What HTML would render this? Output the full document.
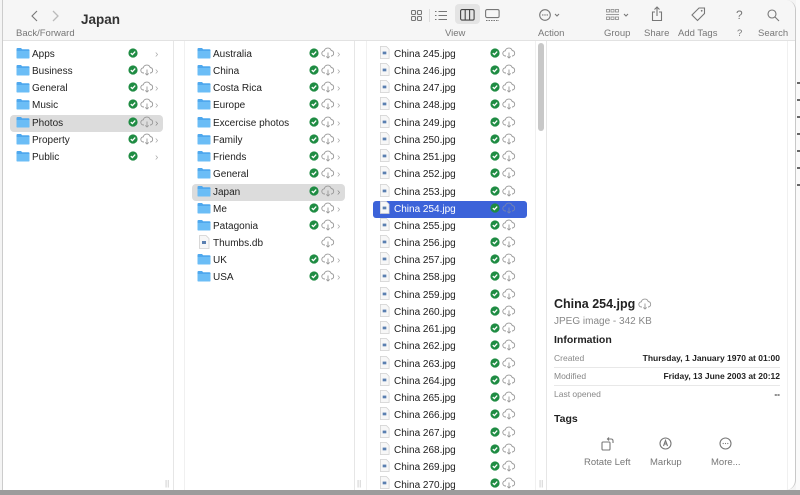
<!DOCTYPE html>
<html><head><meta charset="utf-8">
<style>
*{margin:0;padding:0;box-sizing:border-box}
body{width:800px;height:495px;background:#f4f4f4;position:relative;overflow:hidden;font-family:"Liberation Sans",sans-serif;color:#222}
.bg{position:absolute;left:0;top:490px;width:800px;height:5px;background:#9c9c9c}
.rstrip{position:absolute;left:796px;top:0;width:4px;height:490px;background:#fafafa}
.win{position:absolute;left:2px;top:0;width:794px;height:490px;background:#fff;border-radius:0 10px 10px 0;border-left:1px solid #ccc;border-right:1px solid #c8c8c8;overflow:hidden}
.tb{position:absolute;left:0;top:0;width:794px;height:41px;background:#f6f6f6;border-bottom:1px solid #e2e2e2}
.a{position:absolute;white-space:nowrap}
.lbl{font-size:9.5px;color:#777}
.row{position:absolute;height:17px;font-size:10px;line-height:17px;white-space:nowrap;margin-top:1px}
.sel{background:#dcdcdc;border-radius:4px}
.blue{background:#3c63d9;color:#fff;border-radius:3px}
.vl{position:absolute;top:41px;width:1px;height:449px;background:#e6e6e6}
.hd{position:absolute;font-size:8px;color:#bbb;top:479px}
svg{position:absolute}
.ic{stroke:#777;fill:none;stroke-width:1.1}
</style></head><body>
<div class="bg"></div><div class="rstrip"></div>
<svg width="0" height="0" style="position:absolute">
<defs>
<symbol id="fo" viewBox="0 0 14 12"><path d="M0.5 2 Q0.5 1 1.5 1 H5 L6.2 2.3 H12.5 Q13.5 2.3 13.5 3.3 V10.5 Q13.5 11.5 12.5 11.5 H1.5 Q0.5 11.5 0.5 10.5Z" fill="#4fa8ee"/><path d="M0.5 4 H13.5 V10.5 Q13.5 11.5 12.5 11.5 H1.5 Q0.5 11.5 0.5 10.5Z" fill="#6bbdf6"/></symbol>
<symbol id="ck" viewBox="0 0 10 10"><circle cx="5" cy="5" r="4.6" fill="#1f8c43"/><path d="M2.8 5.1 L4.4 6.6 L7.2 3.6" stroke="#fff" stroke-width="1.3" fill="none"/></symbol>
<symbol id="cl" viewBox="0 0 14 12"><path d="M4 9 H3.5 A2.6 2.6 0 0 1 3.3 3.8 A3.6 3.6 0 0 1 10.2 3.5 A2.8 2.8 0 0 1 10.5 9 H10" stroke="#999" stroke-width="0.9" fill="none"/><path d="M7 5.5 V11 M5.3 9.4 L7 11 L8.7 9.4" stroke="#999" stroke-width="0.9" fill="none"/></symbol>
<symbol id="fi" viewBox="0 0 12 14"><path d="M1.5 0.5 H8 L11 3.5 V13.5 H1.5Z" fill="#f7f7f7" stroke="#cfcfcf" stroke-width="0.8"/><rect x="4" y="6" width="4" height="3" fill="#5a7fb0"/></symbol>
</defs></svg>
<div class="win">
<div class="tb">
 <svg style="left:27px;top:10px" width="10" height="12"><path d="M7 1 L2 6 L7 11" class="ic" stroke-width="1.3"/></svg>
 <svg style="left:47px;top:10px" width="10" height="12"><path d="M3 1 L8 6 L3 11" stroke="#bbb" fill="none" stroke-width="1.3"/></svg>
 <div class="a lbl" style="left:13px;top:28px">Back/Forward</div>
 <div class="a" style="left:78px;top:12px;font-size:13.5px;font-weight:bold;color:#333">Japan</div>
 <svg style="left:408px;top:10px" width="11" height="11"><g class="ic" stroke-width="0.9"><rect x="0.5" y="0.5" width="4" height="4" rx="1"/><rect x="6.5" y="0.5" width="4" height="4" rx="1"/><rect x="0.5" y="6.5" width="4" height="4" rx="1"/><rect x="6.5" y="6.5" width="4" height="4" rx="1"/></g></svg>
 <div class="a" style="left:426px;top:9px;width:1px;height:13px;background:#ddd"></div>
 <svg style="left:432px;top:10px" width="13" height="11"><g class="ic" stroke-width="0.9"><path d="M0 1.5 H1.5 M0 5.5 H1.5 M0 9.5 H1.5 M3.5 1.5 H12 M3.5 5.5 H12 M3.5 9.5 H12"/></g></svg>
 <div class="a" style="left:452px;top:4px;width:25px;height:20px;background:#e4e4e4;border-radius:4px"></div>
 <svg style="left:457px;top:9px" width="15" height="12"><g stroke="#444" fill="none" stroke-width="1.1"><rect x="0.6" y="0.6" width="13.5" height="10.5" rx="1.5"/><path d="M5.2 0.6 V11 M9.6 0.6 V11"/></g></svg>
 <svg style="left:482px;top:9px" width="15" height="13"><g class="ic" stroke-width="0.9"><rect x="0.6" y="0.6" width="13.5" height="8" rx="1.5"/><path d="M1 11.5 H14" stroke-dasharray="1.5 1"/></g></svg>
 <div class="a lbl" style="left:442px;top:28px">View</div>
 <svg style="left:536px;top:9px" width="24" height="13"><circle cx="6" cy="6" r="5.3" class="ic"/><circle cx="3.8" cy="6" r="0.7" fill="#777"/><circle cx="6" cy="6" r="0.7" fill="#777"/><circle cx="8.2" cy="6" r="0.7" fill="#777"/><path d="M16 5 L18 7 L20 5" class="ic"/></svg>
 <div class="a lbl" style="left:535px;top:28px">Action</div>
 <svg style="left:603px;top:9px" width="26" height="13"><g fill="none" stroke="#888" stroke-width="0.8"><rect x="0.5" y="0.5" width="3" height="2.5"/><rect x="5" y="0.5" width="3" height="2.5"/><rect x="9.5" y="0.5" width="3" height="2.5"/><rect x="0.5" y="8" width="3" height="2.5"/><rect x="5" y="8" width="3" height="2.5"/><rect x="9.5" y="8" width="3" height="2.5"/><path d="M0 5.5 H13"/></g><path d="M18 5 L20 7 L22 5" class="ic"/></svg>
 <div class="a lbl" style="left:601px;top:28px">Group</div>
 <svg style="left:648px;top:6px" width="12" height="16"><g class="ic"><path d="M4 6 H1.5 V14.5 H10.5 V6 H8 M6 1 V10 M3.5 3.5 L6 1 L8.5 3.5"/></g></svg>
 <div class="a lbl" style="left:641px;top:28px">Share</div>
 <svg style="left:688px;top:7px" width="15" height="15"><path d="M8 1 H13.5 V6.5 L6.5 13.5 L1 8 Z" class="ic"/><circle cx="10.7" cy="3.8" r="0.9" fill="#777"/></svg>
 <div class="a lbl" style="left:675px;top:28px">Add Tags</div>
 <div class="a" style="left:733px;top:8px;font-size:12px;color:#777">?</div>
 <div class="a lbl" style="left:734px;top:28px">?</div>
 <svg style="left:764px;top:9px" width="13" height="13"><circle cx="5" cy="5" r="4" class="ic"/><path d="M8 8 L12 12" class="ic" stroke-width="1.3"/></svg>
 <div class="a lbl" style="left:755px;top:28px">Search</div>
</div>
<div class="vl" style="left:170px"></div>
<div class="vl" style="left:181px;background:#f0f0f0"></div>
<div class="vl" style="left:351px"></div>
<div class="vl" style="left:363px;background:#f0f0f0"></div>
<div class="vl" style="left:532px;background:#f0f0f0"></div>
<div class="vl" style="left:543px"></div>
<div class="vl" style="left:784px;background:#f0f0f0"></div>
<div class="a" style="left:535px;top:43px;width:6px;height:88px;background:#c8c8c8;border-radius:3px"></div>
<div class="hd" style="left:162px">||</div><div class="hd" style="left:354px">||</div><div class="hd" style="left:536px">||</div>
</div>
<div class="row sel" style="left:10px;top:114px;width:153px"></div>
<div class="row sel" style="left:192px;top:183px;width:153px"></div>
<div class="row blue" style="left:373px;top:200px;width:154px"></div>
<svg style="left:16px;top:47px" width="14" height="12"><use href="#fo"/></svg><div class="row" style="left:32px;top:45px">Apps</div><svg style="left:128px;top:48px" width="10" height="10"><use href="#ck"/></svg><div class="row" style="left:155px;top:45px;color:#aaa">›</div>
<svg style="left:16px;top:64px" width="14" height="12"><use href="#fo"/></svg><div class="row" style="left:32px;top:62px">Business</div><svg style="left:128px;top:65px" width="10" height="10"><use href="#ck"/></svg><svg style="left:140px;top:64px" width="14" height="12"><use href="#cl"/></svg><div class="row" style="left:155px;top:62px;color:#aaa">›</div>
<svg style="left:16px;top:81px" width="14" height="12"><use href="#fo"/></svg><div class="row" style="left:32px;top:79px">General</div><svg style="left:128px;top:82px" width="10" height="10"><use href="#ck"/></svg><svg style="left:140px;top:81px" width="14" height="12"><use href="#cl"/></svg><div class="row" style="left:155px;top:79px;color:#aaa">›</div>
<svg style="left:16px;top:98px" width="14" height="12"><use href="#fo"/></svg><div class="row" style="left:32px;top:96px">Music</div><svg style="left:128px;top:99px" width="10" height="10"><use href="#ck"/></svg><svg style="left:140px;top:98px" width="14" height="12"><use href="#cl"/></svg><div class="row" style="left:155px;top:96px;color:#aaa">›</div>
<svg style="left:16px;top:116px" width="14" height="12"><use href="#fo"/></svg><div class="row" style="left:32px;top:114px">Photos</div><svg style="left:128px;top:117px" width="10" height="10"><use href="#ck"/></svg><svg style="left:140px;top:116px" width="14" height="12"><use href="#cl"/></svg><div class="row" style="left:155px;top:114px;color:#888">›</div>
<svg style="left:16px;top:133px" width="14" height="12"><use href="#fo"/></svg><div class="row" style="left:32px;top:131px">Property</div><svg style="left:128px;top:134px" width="10" height="10"><use href="#ck"/></svg><svg style="left:140px;top:133px" width="14" height="12"><use href="#cl"/></svg><div class="row" style="left:155px;top:131px;color:#aaa">›</div>
<svg style="left:16px;top:150px" width="14" height="12"><use href="#fo"/></svg><div class="row" style="left:32px;top:148px">Public</div><svg style="left:128px;top:151px" width="10" height="10"><use href="#ck"/></svg><div class="row" style="left:155px;top:148px;color:#aaa">›</div>
<svg style="left:197px;top:47px" width="14" height="12"><use href="#fo"/></svg><div class="row" style="left:213px;top:45px">Australia</div><svg style="left:309px;top:48px" width="10" height="10"><use href="#ck"/></svg><svg style="left:321px;top:47px" width="14" height="12"><use href="#cl"/></svg><div class="row" style="left:337px;top:45px;color:#aaa">›</div>
<svg style="left:197px;top:64px" width="14" height="12"><use href="#fo"/></svg><div class="row" style="left:213px;top:62px">China</div><svg style="left:309px;top:65px" width="10" height="10"><use href="#ck"/></svg><svg style="left:321px;top:64px" width="14" height="12"><use href="#cl"/></svg><div class="row" style="left:337px;top:62px;color:#aaa">›</div>
<svg style="left:197px;top:81px" width="14" height="12"><use href="#fo"/></svg><div class="row" style="left:213px;top:79px">Costa Rica</div><svg style="left:309px;top:82px" width="10" height="10"><use href="#ck"/></svg><svg style="left:321px;top:81px" width="14" height="12"><use href="#cl"/></svg><div class="row" style="left:337px;top:79px;color:#aaa">›</div>
<svg style="left:197px;top:98px" width="14" height="12"><use href="#fo"/></svg><div class="row" style="left:213px;top:96px">Europe</div><svg style="left:309px;top:99px" width="10" height="10"><use href="#ck"/></svg><svg style="left:321px;top:98px" width="14" height="12"><use href="#cl"/></svg><div class="row" style="left:337px;top:96px;color:#aaa">›</div>
<svg style="left:197px;top:116px" width="14" height="12"><use href="#fo"/></svg><div class="row" style="left:213px;top:114px">Excercise photos</div><svg style="left:309px;top:117px" width="10" height="10"><use href="#ck"/></svg><svg style="left:321px;top:116px" width="14" height="12"><use href="#cl"/></svg><div class="row" style="left:337px;top:114px;color:#aaa">›</div>
<svg style="left:197px;top:133px" width="14" height="12"><use href="#fo"/></svg><div class="row" style="left:213px;top:131px">Family</div><svg style="left:309px;top:134px" width="10" height="10"><use href="#ck"/></svg><svg style="left:321px;top:133px" width="14" height="12"><use href="#cl"/></svg><div class="row" style="left:337px;top:131px;color:#aaa">›</div>
<svg style="left:197px;top:150px" width="14" height="12"><use href="#fo"/></svg><div class="row" style="left:213px;top:148px">Friends</div><svg style="left:309px;top:151px" width="10" height="10"><use href="#ck"/></svg><svg style="left:321px;top:150px" width="14" height="12"><use href="#cl"/></svg><div class="row" style="left:337px;top:148px;color:#aaa">›</div>
<svg style="left:197px;top:167px" width="14" height="12"><use href="#fo"/></svg><div class="row" style="left:213px;top:165px">General</div><svg style="left:309px;top:168px" width="10" height="10"><use href="#ck"/></svg><svg style="left:321px;top:167px" width="14" height="12"><use href="#cl"/></svg><div class="row" style="left:337px;top:165px;color:#aaa">›</div>
<svg style="left:197px;top:185px" width="14" height="12"><use href="#fo"/></svg><div class="row" style="left:213px;top:183px">Japan</div><svg style="left:309px;top:186px" width="10" height="10"><use href="#ck"/></svg><svg style="left:321px;top:185px" width="14" height="12"><use href="#cl"/></svg><div class="row" style="left:337px;top:183px;color:#888">›</div>
<svg style="left:197px;top:202px" width="14" height="12"><use href="#fo"/></svg><div class="row" style="left:213px;top:200px">Me</div><svg style="left:309px;top:203px" width="10" height="10"><use href="#ck"/></svg><svg style="left:321px;top:202px" width="14" height="12"><use href="#cl"/></svg><div class="row" style="left:337px;top:200px;color:#aaa">›</div>
<svg style="left:197px;top:219px" width="14" height="12"><use href="#fo"/></svg><div class="row" style="left:213px;top:217px">Patagonia</div><svg style="left:309px;top:220px" width="10" height="10"><use href="#ck"/></svg><svg style="left:321px;top:219px" width="14" height="12"><use href="#cl"/></svg><div class="row" style="left:337px;top:217px;color:#aaa">›</div>
<svg style="left:198px;top:235px" width="12" height="14"><use href="#fi"/></svg><div class="row" style="left:213px;top:234px">Thumbs.db</div><svg style="left:321px;top:236px" width="14" height="12"><use href="#cl"/></svg>
<svg style="left:197px;top:253px" width="14" height="12"><use href="#fo"/></svg><div class="row" style="left:213px;top:251px">UK</div><svg style="left:309px;top:254px" width="10" height="10"><use href="#ck"/></svg><svg style="left:321px;top:253px" width="14" height="12"><use href="#cl"/></svg><div class="row" style="left:337px;top:251px;color:#aaa">›</div>
<svg style="left:197px;top:270px" width="14" height="12"><use href="#fo"/></svg><div class="row" style="left:213px;top:268px">USA</div><svg style="left:309px;top:271px" width="10" height="10"><use href="#ck"/></svg><svg style="left:321px;top:270px" width="14" height="12"><use href="#cl"/></svg><div class="row" style="left:337px;top:268px;color:#aaa">›</div>
<svg style="left:379px;top:46px" width="11" height="13"><use href="#fi"/></svg><div class="row" style="left:394px;top:45px">China 245.jpg</div><svg style="left:490px;top:48px" width="10" height="10"><use href="#ck"/></svg><svg style="left:502px;top:47px" width="14" height="12"><use href="#cl"/></svg>
<svg style="left:379px;top:63px" width="11" height="13"><use href="#fi"/></svg><div class="row" style="left:394px;top:62px">China 246.jpg</div><svg style="left:490px;top:65px" width="10" height="10"><use href="#ck"/></svg><svg style="left:502px;top:64px" width="14" height="12"><use href="#cl"/></svg>
<svg style="left:379px;top:80px" width="11" height="13"><use href="#fi"/></svg><div class="row" style="left:394px;top:79px">China 247.jpg</div><svg style="left:490px;top:82px" width="10" height="10"><use href="#ck"/></svg><svg style="left:502px;top:81px" width="14" height="12"><use href="#cl"/></svg>
<svg style="left:379px;top:97px" width="11" height="13"><use href="#fi"/></svg><div class="row" style="left:394px;top:96px">China 248.jpg</div><svg style="left:490px;top:99px" width="10" height="10"><use href="#ck"/></svg><svg style="left:502px;top:98px" width="14" height="12"><use href="#cl"/></svg>
<svg style="left:379px;top:115px" width="11" height="13"><use href="#fi"/></svg><div class="row" style="left:394px;top:114px">China 249.jpg</div><svg style="left:490px;top:117px" width="10" height="10"><use href="#ck"/></svg><svg style="left:502px;top:116px" width="14" height="12"><use href="#cl"/></svg>
<svg style="left:379px;top:132px" width="11" height="13"><use href="#fi"/></svg><div class="row" style="left:394px;top:131px">China 250.jpg</div><svg style="left:490px;top:134px" width="10" height="10"><use href="#ck"/></svg><svg style="left:502px;top:133px" width="14" height="12"><use href="#cl"/></svg>
<svg style="left:379px;top:149px" width="11" height="13"><use href="#fi"/></svg><div class="row" style="left:394px;top:148px">China 251.jpg</div><svg style="left:490px;top:151px" width="10" height="10"><use href="#ck"/></svg><svg style="left:502px;top:150px" width="14" height="12"><use href="#cl"/></svg>
<svg style="left:379px;top:166px" width="11" height="13"><use href="#fi"/></svg><div class="row" style="left:394px;top:165px">China 252.jpg</div><svg style="left:490px;top:168px" width="10" height="10"><use href="#ck"/></svg><svg style="left:502px;top:167px" width="14" height="12"><use href="#cl"/></svg>
<svg style="left:379px;top:184px" width="11" height="13"><use href="#fi"/></svg><div class="row" style="left:394px;top:183px">China 253.jpg</div><svg style="left:490px;top:186px" width="10" height="10"><use href="#ck"/></svg><svg style="left:502px;top:185px" width="14" height="12"><use href="#cl"/></svg>
<svg style="left:379px;top:201px" width="11" height="13"><use href="#fi"/></svg><div class="row" style="left:394px;top:200px;color:#fff">China 254.jpg</div><svg style="left:490px;top:203px" width="10" height="10"><use href="#ck"/></svg><svg style="left:502px;top:202px;opacity:.6" width="14" height="12"><use href="#cl"/></svg>
<svg style="left:379px;top:218px" width="11" height="13"><use href="#fi"/></svg><div class="row" style="left:394px;top:217px">China 255.jpg</div><svg style="left:490px;top:220px" width="10" height="10"><use href="#ck"/></svg><svg style="left:502px;top:219px" width="14" height="12"><use href="#cl"/></svg>
<svg style="left:379px;top:235px" width="11" height="13"><use href="#fi"/></svg><div class="row" style="left:394px;top:234px">China 256.jpg</div><svg style="left:490px;top:237px" width="10" height="10"><use href="#ck"/></svg><svg style="left:502px;top:236px" width="14" height="12"><use href="#cl"/></svg>
<svg style="left:379px;top:252px" width="11" height="13"><use href="#fi"/></svg><div class="row" style="left:394px;top:251px">China 257.jpg</div><svg style="left:490px;top:254px" width="10" height="10"><use href="#ck"/></svg><svg style="left:502px;top:253px" width="14" height="12"><use href="#cl"/></svg>
<svg style="left:379px;top:269px" width="11" height="13"><use href="#fi"/></svg><div class="row" style="left:394px;top:268px">China 258.jpg</div><svg style="left:490px;top:271px" width="10" height="10"><use href="#ck"/></svg><svg style="left:502px;top:270px" width="14" height="12"><use href="#cl"/></svg>
<svg style="left:379px;top:287px" width="11" height="13"><use href="#fi"/></svg><div class="row" style="left:394px;top:286px">China 259.jpg</div><svg style="left:490px;top:289px" width="10" height="10"><use href="#ck"/></svg><svg style="left:502px;top:288px" width="14" height="12"><use href="#cl"/></svg>
<svg style="left:379px;top:304px" width="11" height="13"><use href="#fi"/></svg><div class="row" style="left:394px;top:303px">China 260.jpg</div><svg style="left:490px;top:306px" width="10" height="10"><use href="#ck"/></svg><svg style="left:502px;top:305px" width="14" height="12"><use href="#cl"/></svg>
<svg style="left:379px;top:321px" width="11" height="13"><use href="#fi"/></svg><div class="row" style="left:394px;top:320px">China 261.jpg</div><svg style="left:490px;top:323px" width="10" height="10"><use href="#ck"/></svg><svg style="left:502px;top:322px" width="14" height="12"><use href="#cl"/></svg>
<svg style="left:379px;top:338px" width="11" height="13"><use href="#fi"/></svg><div class="row" style="left:394px;top:337px">China 262.jpg</div><svg style="left:490px;top:340px" width="10" height="10"><use href="#ck"/></svg><svg style="left:502px;top:339px" width="14" height="12"><use href="#cl"/></svg>
<svg style="left:379px;top:356px" width="11" height="13"><use href="#fi"/></svg><div class="row" style="left:394px;top:355px">China 263.jpg</div><svg style="left:490px;top:358px" width="10" height="10"><use href="#ck"/></svg><svg style="left:502px;top:357px" width="14" height="12"><use href="#cl"/></svg>
<svg style="left:379px;top:373px" width="11" height="13"><use href="#fi"/></svg><div class="row" style="left:394px;top:372px">China 264.jpg</div><svg style="left:490px;top:375px" width="10" height="10"><use href="#ck"/></svg><svg style="left:502px;top:374px" width="14" height="12"><use href="#cl"/></svg>
<svg style="left:379px;top:390px" width="11" height="13"><use href="#fi"/></svg><div class="row" style="left:394px;top:389px">China 265.jpg</div><svg style="left:490px;top:392px" width="10" height="10"><use href="#ck"/></svg><svg style="left:502px;top:391px" width="14" height="12"><use href="#cl"/></svg>
<svg style="left:379px;top:407px" width="11" height="13"><use href="#fi"/></svg><div class="row" style="left:394px;top:406px">China 266.jpg</div><svg style="left:490px;top:409px" width="10" height="10"><use href="#ck"/></svg><svg style="left:502px;top:408px" width="14" height="12"><use href="#cl"/></svg>
<svg style="left:379px;top:425px" width="11" height="13"><use href="#fi"/></svg><div class="row" style="left:394px;top:424px">China 267.jpg</div><svg style="left:490px;top:427px" width="10" height="10"><use href="#ck"/></svg><svg style="left:502px;top:426px" width="14" height="12"><use href="#cl"/></svg>
<svg style="left:379px;top:442px" width="11" height="13"><use href="#fi"/></svg><div class="row" style="left:394px;top:441px">China 268.jpg</div><svg style="left:490px;top:444px" width="10" height="10"><use href="#ck"/></svg><svg style="left:502px;top:443px" width="14" height="12"><use href="#cl"/></svg>
<svg style="left:379px;top:459px" width="11" height="13"><use href="#fi"/></svg><div class="row" style="left:394px;top:458px">China 269.jpg</div><svg style="left:490px;top:461px" width="10" height="10"><use href="#ck"/></svg><svg style="left:502px;top:460px" width="14" height="12"><use href="#cl"/></svg>
<svg style="left:379px;top:476px" width="11" height="13"><use href="#fi"/></svg><div class="row" style="left:394px;top:476px">China 270.jpg</div><svg style="left:490px;top:478px" width="10" height="10"><use href="#ck"/></svg><svg style="left:502px;top:477px" width="14" height="12"><use href="#cl"/></svg>
<div class="a" style="left:554px;top:297px;font-size:12.5px;font-weight:bold;color:#222">China 254.jpg</div>
<svg style="left:638px;top:298px" width="14" height="12"><use href="#cl"/></svg>
<div class="a" style="left:554px;top:316px;font-size:10px;color:#888">JPEG image - 342 KB</div>
<div class="a" style="left:554px;top:334px;font-size:10.5px;font-weight:bold">Information</div>
<div class="a" style="left:554px;top:353px;font-size:8.5px;color:#888">Created</div>
<div class="a" style="left:780px;top:353px;font-size:8.5px;font-weight:bold;transform:translateX(-100%)">Thursday, 1 January 1970 at 01:00</div>
<div class="a" style="left:554px;top:367px;width:226px;height:1px;background:#e8e8e8"></div>
<div class="a" style="left:554px;top:371px;font-size:8.5px;color:#888">Modified</div>
<div class="a" style="left:780px;top:371px;font-size:8.5px;font-weight:bold;transform:translateX(-100%)">Friday, 13 June 2003 at 20:12</div>
<div class="a" style="left:554px;top:385px;width:226px;height:1px;background:#e8e8e8"></div>
<div class="a" style="left:554px;top:389px;font-size:8.5px;color:#888">Last opened</div>
<div class="a" style="left:780px;top:389px;font-size:8.5px;font-weight:bold;transform:translateX(-100%)">--</div>
<div class="a" style="left:554px;top:413px;font-size:10.5px;font-weight:bold">Tags</div>
<svg style="left:601px;top:437px" width="14" height="14"><g class="ic" stroke-width="0.9"><rect x="1" y="5" width="8" height="8" rx="1"/><path d="M7 2 H10 Q12 2 12 4 V6 M8 0.5 L6.5 2 L8 3.5"/></g></svg>
<div class="a lbl" style="left:584px;top:457px">Rotate Left</div>
<svg style="left:659px;top:437px" width="13" height="13"><circle cx="6.5" cy="6.5" r="5.5" class="ic" stroke-width="0.9"/><path d="M4.5 9 L6.5 3.5 L8.5 9 M5.3 7 H7.7" class="ic" stroke-width="0.9"/></svg>
<div class="a lbl" style="left:650px;top:457px">Markup</div>
<svg style="left:719px;top:437px" width="13" height="13"><circle cx="6.5" cy="6.5" r="5.5" class="ic" stroke-width="0.9"/><circle cx="4.2" cy="6.5" r=".6" fill="#777"/><circle cx="6.5" cy="6.5" r=".6" fill="#777"/><circle cx="8.8" cy="6.5" r=".6" fill="#777"/></svg>
<div class="a lbl" style="left:711px;top:457px">More...</div>
<div class="a" style="left:797px;top:72px;width:3px;height:120px;background:repeating-linear-gradient(#fafafa 0 10px,#666 10px 12px,#fafafa 12px 17px)"></div>
</body></html>
